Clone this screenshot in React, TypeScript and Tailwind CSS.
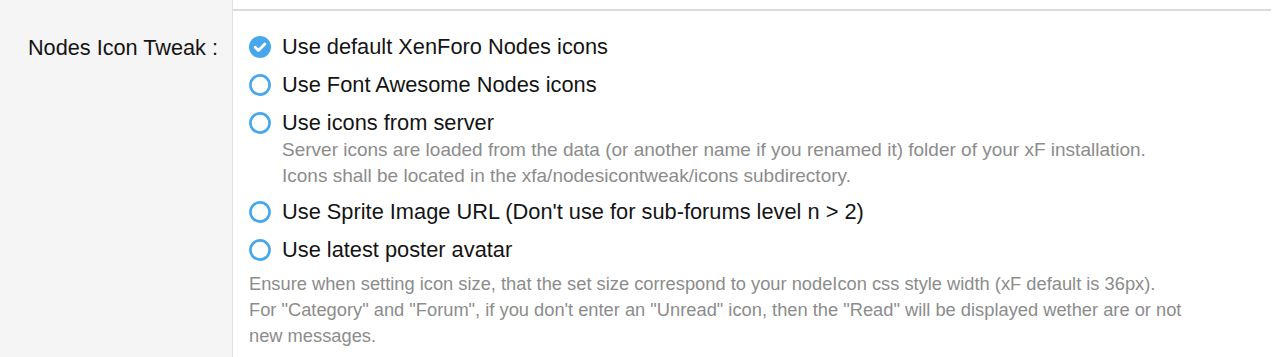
import React from "react";

const font = { fontFamily: '"Liberation Sans", Arial, sans-serif' };

function Radio({ checked }: { checked?: boolean }) {
  if (checked) {
    return (
      <svg width="22" height="22" viewBox="0 0 22 22" className="shrink-0">
        <circle cx="11" cy="11" r="11" fill="#47a7eb" />
        <path d="M6.2 11.2 L9.4 14.4 L15.8 8" fill="none" stroke="#fff" strokeWidth="2.8" strokeLinecap="round" strokeLinejoin="round" />
      </svg>
    );
  }
  return (
    <svg width="22" height="22" viewBox="0 0 22 22" className="shrink-0">
      <circle cx="11" cy="11" r="9.6" fill="#fff" stroke="#47a7eb" strokeWidth="2.6" />
    </svg>
  );
}

function Option({ label, checked }: { label: string; checked?: boolean }) {
  return (
    <div className="flex items-center gap-[11px] h-[38px]">
      <Radio checked={checked} />
      <span className="text-[21.8px] text-[#141414]">{label}</span>
    </div>
  );
}

export default function App() {
  return (
    <div className="flex h-[357px] w-[1280px] overflow-hidden bg-white" style={font}>
      <div className="w-[233px] shrink-0 bg-[#f5f5f5] border-r border-[#e0e0e0] pt-[32px] pr-[14px] text-right">
        <span className="text-[21.7px] text-[#141414]">Nodes Icon Tweak :</span>
      </div>
      <div className="flex-1 flex flex-col">
        <div className="h-[9px]" />
        <div className="h-[2px] bg-[#dcdcdc] mr-[9px]" />
        <div className="pl-[16px] pt-[17px]">
          <Option label="Use default XenForo Nodes icons" checked />
          <Option label="Use Font Awesome Nodes icons" />
          <Option label="Use icons from server" />
          <div className="pl-[33px] text-[19px] leading-[26px] text-[#8c8c8c] -mt-[5px] mb-[4px]">
            <div>Server icons are loaded from the data (or another name if you renamed it) folder of your xF installation.</div>
            <div>Icons shall be located in the xfa/nodesicontweak/icons subdirectory.</div>
          </div>
          <Option label="Use Sprite Image URL (Don't use for sub-forums level n > 2)" />
          <Option label="Use latest poster avatar" />
          <div className="text-[18.3px] leading-[26px] text-[#8c8c8c] mt-[2px] pr-[72px]">
            Ensure when setting icon size, that the set size correspond to your nodeIcon css style width (xF default is 36px).
            <br />
            For "Category" and "Forum", if you don't enter an "Unread" icon, then the "Read" will be displayed wether are or not new messages.
          </div>
        </div>
      </div>
    </div>
  );
}
